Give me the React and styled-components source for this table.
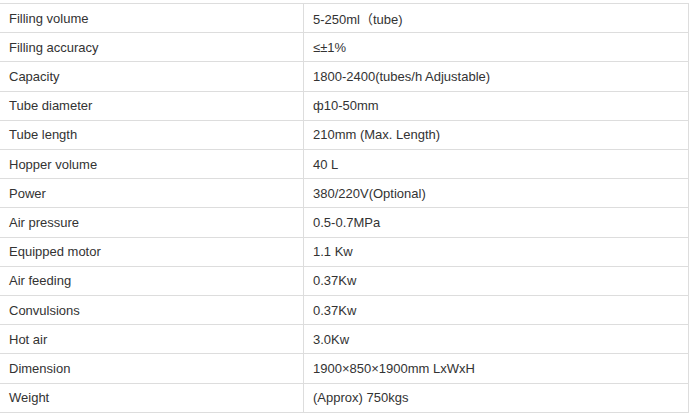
import React from 'react';
import styled, { createGlobalStyle } from 'styled-components';

const specs = [
  ['Filling volume', '5-250ml（tube)'],
  ['Filling accuracy', '≤±1%'],
  ['Capacity', '1800-2400(tubes/h Adjustable)'],
  ['Tube diameter', 'ф10-50mm'],
  ['Tube length', '210mm (Max. Length)'],
  ['Hopper volume', '40 L'],
  ['Power', '380/220V(Optional)'],
  ['Air pressure', '0.5-0.7MPa'],
  ['Equipped motor', '1.1 Kw'],
  ['Air feeding', '0.37Kw'],
  ['Convulsions', '0.37Kw'],
  ['Hot air', '3.0Kw'],
  ['Dimension', '1900×850×1900mm LxWxH'],
  ['Weight', '(Approx) 750kgs'],
];

const Global = createGlobalStyle`
  html, body {
    margin: 0;
    padding: 0;
    background: #fff;
  }
  body {
    font-family: "Liberation Sans", Arial, "Noto Sans CJK SC", sans-serif;
  }
`;

const Page = styled.div`
  padding-top: 3px;
  width: 692px;
  height: 416px;
  box-sizing: border-box;
  overflow: hidden;
`;

const Table = styled.div`
  width: 689px;
  border-top: 1px solid #ddd;
  border-right: 1px solid #ddd;
  box-sizing: border-box;
`;

const Row = styled.div`
  display: grid;
  grid-template-columns: 304px 1fr;
  height: calc(409px / 14);
  box-sizing: border-box;
  border-bottom: 1px solid #ddd;
`;

const Cell = styled.div`
  display: flex;
  align-items: center;
  padding-left: 9px;
  font-size: 13px;
  color: #333;
  white-space: nowrap;
  border-right: ${p => (p.$value ? 'none' : '1px solid #ddd')};
`;

const App = () => (
  <>
    <Global />
    <Page>
      <Table>
        {specs.map(([name, value]) => (
          <Row key={name}>
            <Cell>{name}</Cell>
            <Cell $value>{value}</Cell>
          </Row>
        ))}
      </Table>
    </Page>
  </>
);

export default App;
